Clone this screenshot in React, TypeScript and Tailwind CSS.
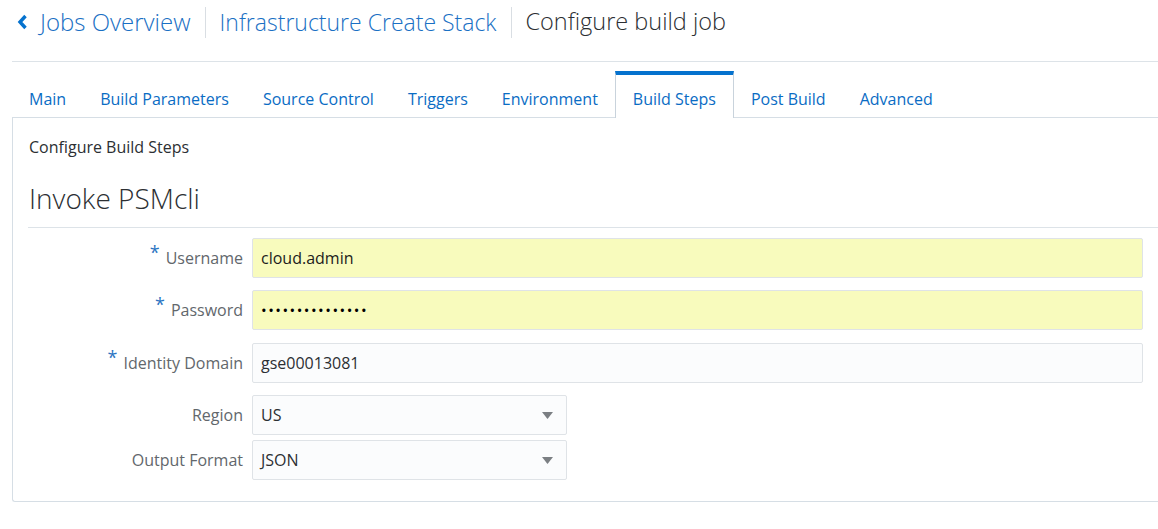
import React from 'react';

const tabs = ['Main', 'Build Parameters', 'Source Control', 'Triggers', 'Environment', 'Build Steps', 'Post Build', 'Advanced'];

const Req = () => <span className="text-[#2b74c2] text-[18px] leading-none relative top-[-6px] mr-[6px]">*</span>;

const Caret = () => (
    <svg width="11" height="7" viewBox="0 0 11 7" className="shrink-0">
        <path d="M0 0 L11 0 L5.5 7 Z" fill="#7b7f83" />
    </svg>
);

const Field: React.FC<{ label: string; req?: boolean; children: React.ReactNode; className?: string }> = ({ label, req, children, className }) => (
    <div className={`flex items-center ${className ?? ''}`}>
        <div className="w-[223px] shrink-0 flex items-center justify-end pr-[9px] text-[16px] text-[#62676c]">
            {req && <Req />}
            <span>{label}</span>
        </div>
        {children}
    </div>
);

export default function App() {
    return (
        <div className="w-full h-[529px] bg-white overflow-hidden" style={{ fontFamily: '"Open Sans", "Noto Sans", sans-serif' }}>
            {/* breadcrumb header */}
            <div className="h-[43px] flex items-center pl-[17px] pt-[1px]">
                <svg width="11" height="16" viewBox="0 0 11 16" className="mr-[12px] mt-[-1px]">
                    <path d="M8.5 2 L3 8 L8.5 14" fill="none" stroke="#0572ce" strokeWidth="3.4" strokeLinejoin="miter" />
                </svg>
                <span className="text-[24px] font-light text-[#1a70c4] leading-none">Jobs Overview</span>
                <div className="w-px h-[31px] bg-[#d9dee3] mx-[14px]" />
                <span className="text-[23px] font-light text-[#1a70c4] leading-none">Infrastructure Create Stack</span>
                <div className="w-px h-[31px] bg-[#d9dee3] mx-[14px]" />
                <span className="text-[23.5px] font-light text-[#2c2f33] leading-none">Configure build job</span>
            </div>

            <div className="ml-[12px] mt-[18px] border-t border-[#dde3e8]">
                {/* tabs */}
                <div className="flex mt-[9px] relative z-10">
                    {tabs.map(t => {
                        const active = t === 'Build Steps';
                        return (
                            <div
                                key={t}
                                className={`px-[17px] pt-[14px] pb-[8px] text-[16px] leading-[20px] text-[#0a6cc4] ${active
                                    ? 'border-t-4 border-t-[#0572ce] border-x border-x-[#c9d3dc] bg-white mb-[-1px] pb-[9px] px-[16px]'
                                    : 'border-t-4 border-t-transparent'}`}
                            >
                                {t}
                            </div>
                        );
                    })}
                </div>

                {/* panel */}
                <div className="border-l border-t border-b border-[#d6dee5] rounded-bl-[3px] pl-4 pb-[21px]">
                    <div className="pt-[17px] text-[16px] text-[#2c2f33]">Configure Build Steps</div>
                    <div className="mt-[22px] text-[28px] font-light text-[#2c2f33] leading-[35px]">Invoke PSMcli</div>
                    <div className="mt-[11px] border-t border-[#dde3e8] ml-[-1px]" />

                    <div className="flex flex-col pr-[15px] mt-[10px]">
                        <Field label="Username" req>
                            <div className="flex-1 h-10 flex items-center pl-2 border border-[#dfe3e7] rounded-[2px] bg-[#f8fbbd] text-[16px] text-[#1c1c1c]">cloud.admin</div>
                        </Field>
                        <Field label="Password" req className="mt-3">
                            <div className="flex-1 h-10 flex items-center pl-2 border border-[#dfe3e7] rounded-[2px] bg-[#f8fbbd] text-[15px] tracking-[1.5px] text-black">{'•'.repeat(15)}</div>
                        </Field>
                        <Field label="Identity Domain" req className="mt-[13px]">
                            <div className="flex-1 h-10 flex items-center pl-2 border border-[#dfe3e7] rounded-[2px] bg-[#fbfcfd] text-[16px] text-[#2c2f33]">gse00013081</div>
                        </Field>
                        <Field label="Region" className="mt-3">
                            <div className="w-[315px] h-10 flex items-center justify-between pl-2 pr-[13px] border border-[#dfe3e7] rounded-[2px] bg-[#fbfcfd] text-[16px] text-[#2c2f33]">
                                <span>US</span>
                                <Caret />
                            </div>
                        </Field>
                        <Field label="Output Format" className="mt-[5px]">
                            <div className="w-[315px] h-10 flex items-center justify-between pl-2 pr-[13px] border border-[#dfe3e7] rounded-[2px] bg-[#fbfcfd] text-[16px] text-[#2c2f33]">
                                <span>JSON</span>
                                <Caret />
                            </div>
                        </Field>
                    </div>
                </div>
            </div>
        </div>
    );
}
